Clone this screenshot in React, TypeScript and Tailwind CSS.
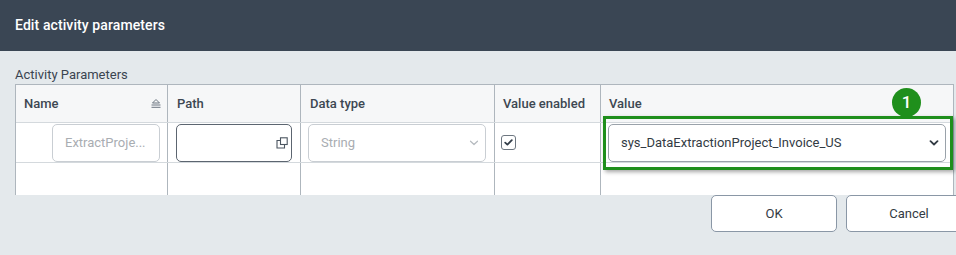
import React from "react";

const font = { fontFamily: "Roboto, 'Liberation Sans', sans-serif" };

function SortIcon() {
  return (
    <svg width="10" height="9" viewBox="0 0 10 9" className="text-[#6b7480]">
      <path d="M5 0.5 L8.5 4 L1.5 4 Z" fill="none" stroke="currentColor" strokeWidth="1" />
      <line x1="0.5" y1="6" x2="9.5" y2="6" stroke="currentColor" strokeWidth="1" />
      <line x1="0.5" y1="8.3" x2="9.5" y2="8.3" stroke="currentColor" strokeWidth="1" />
    </svg>
  );
}

function CopyIcon() {
  return (
    <svg width="12" height="12" viewBox="0 0 12 12" fill="none" stroke="#4b5560" strokeWidth="1.1">
      <path d="M4.5 3.5 H1 V11 H8.5 V7.5" />
      <rect x="4.5" y="0.8" width="6.7" height="6.7" />
    </svg>
  );
}

function Chevron({ color, width }: { color: string; width: number }) {
  return (
    <svg width="10" height="6" viewBox="0 0 10 6" fill="none" stroke={color} strokeWidth={width} strokeLinecap="round" strokeLinejoin="round">
      <path d="M1.5 1.2 L5 4.5 L8.5 1.2" />
    </svg>
  );
}

export default function App() {
  const cell = "border-l border-[#aeb6bd]";
  return (
    <div className="relative w-[956px] h-[255px] overflow-hidden bg-[#e4e9ec]" style={font}>
      <div className="h-[51px] bg-[#3a4654] flex items-center pl-[15px]">
        <span className="text-white text-[14px] font-medium tracking-[0.1px]">Edit activity parameters</span>
      </div>
      <div className="pl-[15px] pt-[16px] h-[33px] text-[13px] leading-[16px] text-[#3a4450]">Activity Parameters</div>
      <div className="ml-[15px] w-[939px] border-t border-l border-r border-[#aeb6bd] bg-white">
        {/* header row */}
        <div className="flex h-[38px] bg-[#f6f7f8] border-b border-[#d4d9dd] text-[13px] font-medium text-[#3d4752]">
          <div className="w-[151px] flex items-center justify-between pl-[8px] pr-[6px]">
            <span>Name</span>
            <SortIcon />
          </div>
          <div className={`w-[133px] flex items-center pl-[9px] ${cell}`}>Path</div>
          <div className={`w-[194px] flex items-center pl-[9px] ${cell}`}>Data type</div>
          <div className={`w-[106px] flex items-center pl-[8px] ${cell}`}>Value enabled</div>
          <div className={`flex-1 flex items-center pl-[8px] ${cell}`}>Value</div>
        </div>
        {/* row 1 */}
        <div className="flex h-[40px] border-b border-[#d4d9dd]">
          <div className="w-[151px] flex items-center justify-end pr-[7px]">
            <div className="w-[108px] h-[38px] border border-[#c9ced3] rounded-[5px] flex items-center pl-[12px] text-[13px] text-[#a9adb2]">
              ExtractProje...
            </div>
          </div>
          <div className={`w-[133px] flex items-center pl-[8px] ${cell}`}>
            <div className="w-[116px] h-[38px] border border-[#5c6570] rounded-[5px] flex items-center justify-end pr-[3px]">
              <CopyIcon />
            </div>
          </div>
          <div className={`w-[194px] flex items-center pl-[7px] ${cell}`}>
            <div className="w-[178px] h-[38px] border border-[#c9ced3] rounded-[5px] flex items-center justify-between pl-[12px] pr-[6px] text-[13px] text-[#a9adb2]">
              <span>String</span>
              <Chevron color="#b5babf" width={1.2} />
            </div>
          </div>
          <div className={`w-[106px] flex items-center pl-[6px] ${cell}`}>
            <div className="w-[15px] h-[15px] border border-[#6e7781] rounded-[3px] flex items-center justify-center">
              <svg width="9" height="7" viewBox="0 0 9 7" fill="none" stroke="#333d48" strokeWidth="1.8" strokeLinecap="round" strokeLinejoin="round">
                <path d="M1.2 3.6 L3.4 5.6 L7.8 1.2" />
              </svg>
            </div>
          </div>
          <div className={`flex-1 flex items-center pl-[7px] ${cell}`}>
            <div className="w-[338px] h-[38px] border border-[#9aa2aa] rounded-[5px] flex items-center justify-between pl-[12px] pr-[6px] text-[13px] text-[#333b44]">
              <span>sys_DataExtractionProject_Invoice_US</span>
              <Chevron color="#333b44" width={1.8} />
            </div>
          </div>
        </div>
        {/* row 2 */}
        <div className="flex h-[32px]">
          <div className="w-[151px]" />
          <div className={`w-[133px] ${cell}`} />
          <div className={`w-[194px] ${cell}`} />
          <div className={`w-[106px] ${cell}`} />
          <div className={`flex-1 ${cell}`} />
        </div>
      </div>
      <div className="flex justify-end gap-[9px] -mr-[16px]">
        <button className="w-[126px] h-[37px] bg-white border border-[#8a97a6] rounded-[5px] text-[13px] text-[#333b44]">OK</button>
        <button className="w-[126px] h-[37px] bg-white border border-[#8a97a6] rounded-[5px] text-[13px] text-[#333b44]">Cancel</button>
      </div>
      {/* highlight overlay */}
      <div className="absolute left-[603px] top-[116px] w-[350px] h-[54px] border-[3px] border-[#1f8f1c] shadow-[2px_2px_4px_rgba(0,0,0,0.35)]" />
      <div className="absolute left-[892px] top-[88px] w-[29px] h-[29px] rounded-full bg-[#1f8f1c] flex items-center justify-center text-white text-[17px] font-medium">
        1
      </div>
    </div>
  );
}
